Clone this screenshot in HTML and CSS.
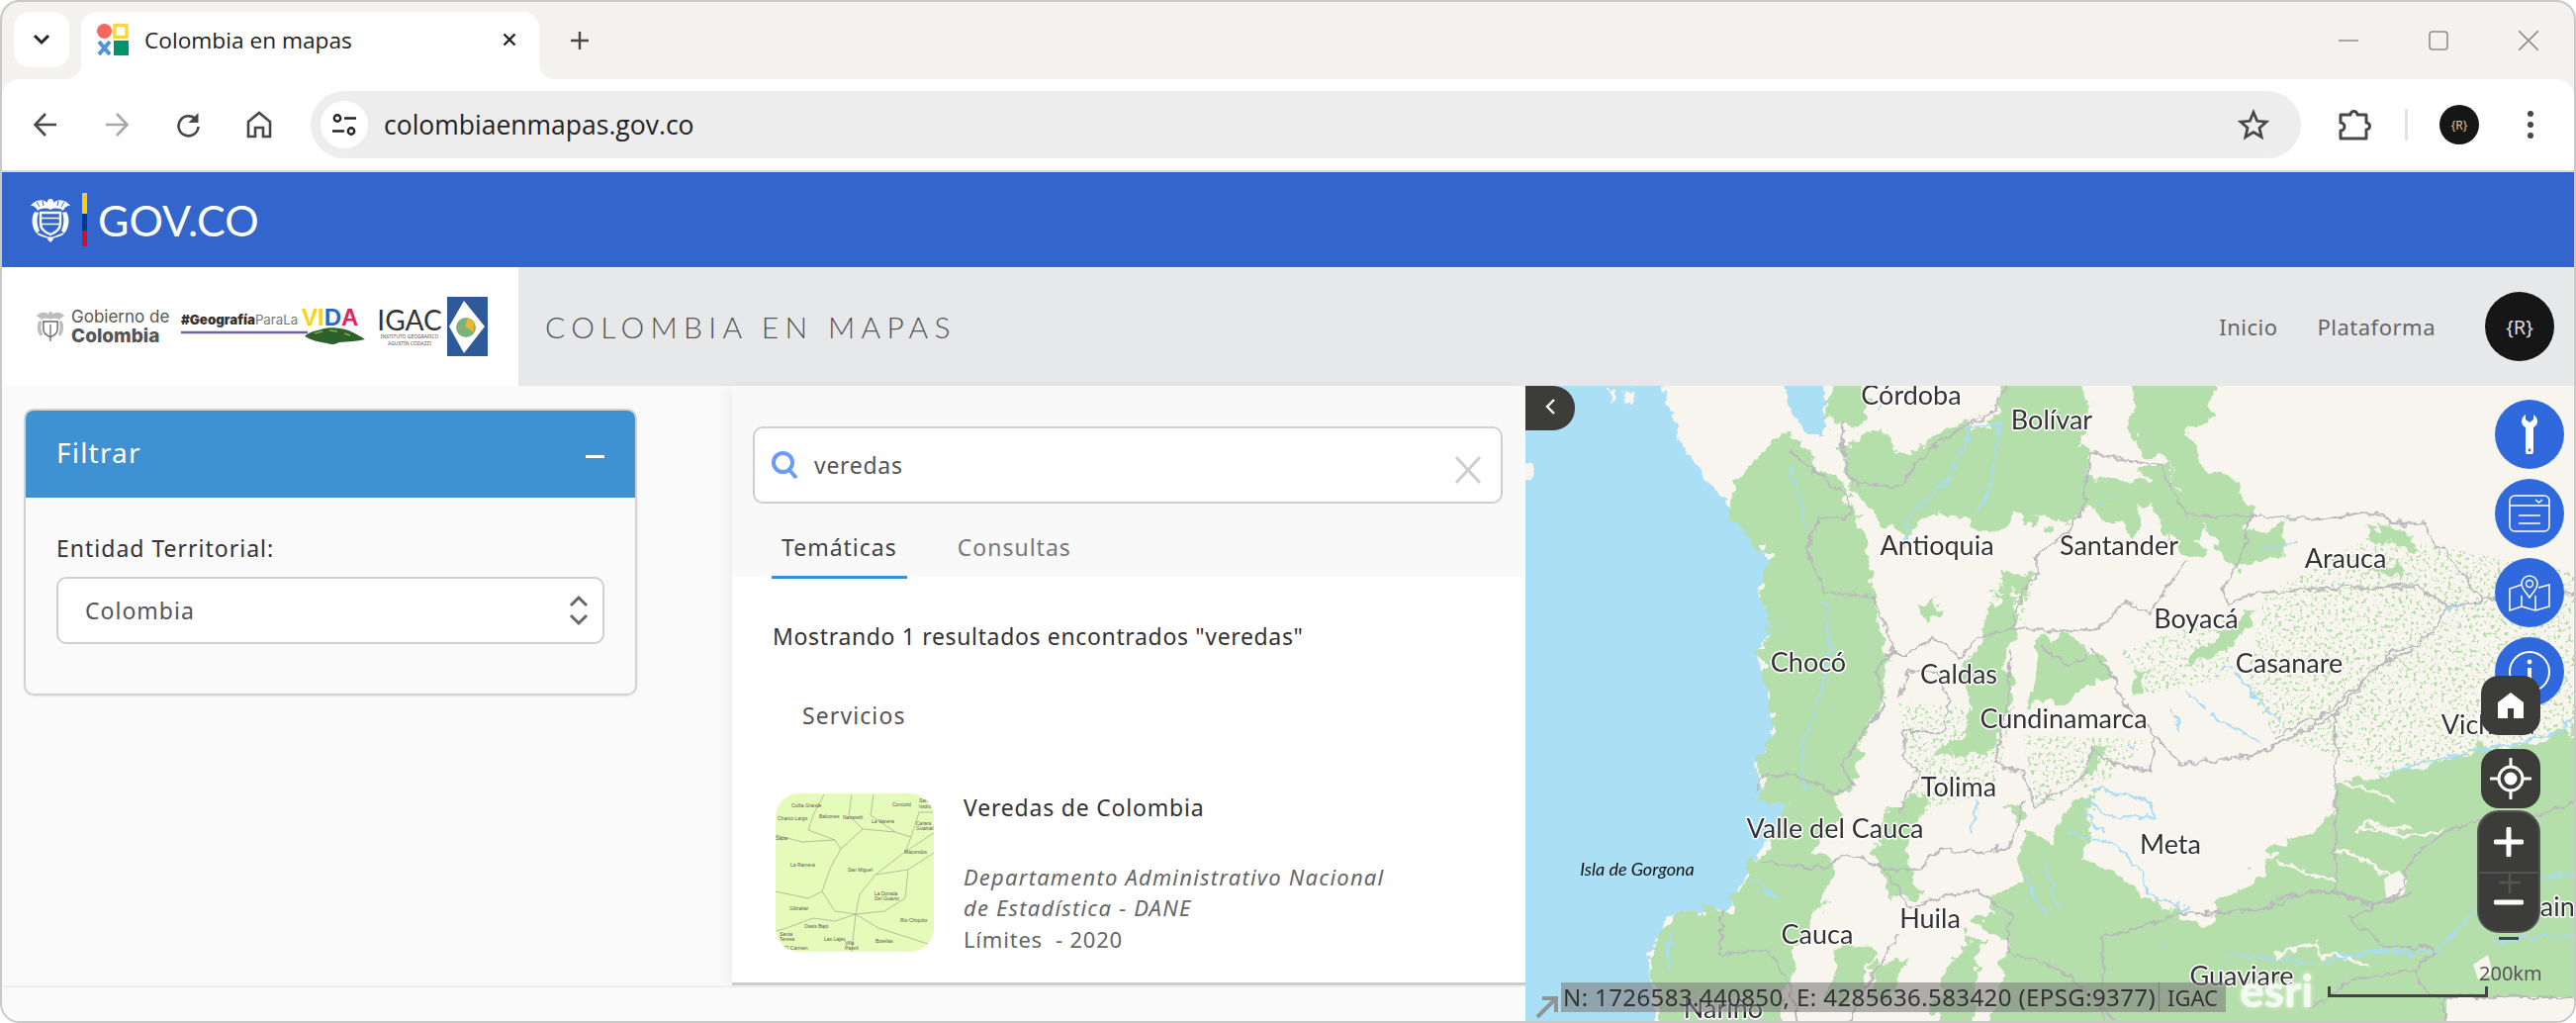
FILE: index.html
```html
<!DOCTYPE html>
<html lang="es">
<head>
  <meta charset="UTF-8">
  <title>Colombia en mapas</title>
  <link rel="stylesheet" href="styles.css">
</head>
<body>
<div class="window">

  <!-- browser chrome -->
  <div class="tabstrip">
    <div class="tab-list">
      <svg width="18" height="12" viewBox="0 0 18 12"><path d="M2 2l7 7 7-7" fill="none" stroke="#222" stroke-width="3"/></svg>
    </div>
    <div class="tab">
      <svg class="favicon" width="32" height="32" viewBox="0 0 32 32">
        <circle cx="7.500" cy="7.500" r="7.500" fill="#f4695b"/>
        <rect x="18" y="1.500" width="12" height="12" fill="none" stroke="#fdd835" stroke-width="3.400"/>
        <path d="M2 18l11 13M13 18L2 31" stroke="#4f94d8" stroke-width="4"/>
        <rect x="17" y="17" width="15" height="15" fill="#00936f"/>
      </svg>
      <span class="tab-title">Colombia en mapas</span>
      <svg class="tab-close" width="14" height="14" viewBox="0 0 14 14"><path d="M1.500 1.500l11 11M12.500 1.500l-11 11" stroke="#222" stroke-width="2.400"/></svg>
    </div>
    <svg class="new-tab" width="20" height="20" viewBox="0 0 20 20"><path d="M10 1v18M1 10h18" stroke="#474747" stroke-width="2.400"/></svg>
    <div class="win-controls">
      <svg width="20" height="20" viewBox="0 0 20 20"><path d="M0 10h20" stroke="#8d8d8d" stroke-width="1.600"/></svg>
      <svg width="20" height="20" viewBox="0 0 20 20"><rect x="1" y="1" width="18" height="18" rx="3" fill="none" stroke="#8d8d8d" stroke-width="1.600"/></svg>
      <svg width="20" height="20" viewBox="0 0 20 20"><path d="M0 0l20 20M20 0L0 20" stroke="#8d8d8d" stroke-width="1.600"/></svg>
    </div>
  </div>

  <div class="toolbar">
    <div class="nav-btn">
      <svg width="26" height="26" viewBox="0 0 26 26"><path d="M24 13H3M13 2L2.500 13 13 24" fill="none" stroke="#474747" stroke-width="2.600"/></svg>
    </div>
    <div class="nav-btn">
      <svg width="26" height="26" viewBox="0 0 26 26"><path d="M2 13h21M13 2l10.500 11L13 24" fill="none" stroke="#a8a8a8" stroke-width="2.600"/></svg>
    </div>
    <div class="nav-btn">
      <svg width="26" height="26" viewBox="0 0 26 26"><path d="M22 9a10 10 0 1 0 1.500 6" fill="none" stroke="#474747" stroke-width="2.600"/><path d="M23.500 1v10h-10z" fill="#474747"/></svg>
    </div>
    <div class="nav-btn">
      <svg width="26" height="28" viewBox="0 0 26 28"><path d="M2 26V11L13 2l11 9v15h-7v-9H9v9z" fill="none" stroke="#474747" stroke-width="2.600"/></svg>
    </div>
    <div class="omnibox">
      <div class="site-info">
        <svg width="26" height="26" viewBox="0 0 26 26" fill="none" stroke="#222" stroke-width="2.400">
          <circle cx="6" cy="6.500" r="3.200"/><path d="M13 6.500h12"/>
          <circle cx="20" cy="19.500" r="3.200"/><path d="M1 19.500h12"/>
        </svg>
      </div>
      <span class="url">colombiaenmapas.gov.co</span>
      <svg class="star" width="32" height="32" viewBox="0 0 32 32"><path d="M16 3.500l3.700 8.800 9.300.8-7 6.200 2.100 9.200L16 23.600l-8.100 4.900L10 19.300l-7-6.200 9.300-.8z" fill="none" stroke="#474747" stroke-width="2.800"/></svg>
    </div>
    <div class="nav-btn puzzle">
      <svg width="34" height="34" viewBox="0 0 34 34"><path d="M3 7h10a3.500 3.500 0 0 1 7 0h9v8a3.500 3.500 0 0 1 0 7v9H3v-8a4 4 0 0 0 0-8z" fill="none" stroke="#474747" stroke-width="3" stroke-linejoin="round"/></svg>
    </div>
    <div class="tool-sep"></div>
    <div class="profile">{R}</div>
    <div class="nav-btn menu-dots"><span></span><span></span><span></span></div>
  </div>

  <!-- gov.co bar -->
  <div class="govbar">
    <svg class="gov-emblem" width="42" height="46" viewBox="0 0 42 46">
      <g fill="#fff">
        <circle cx="21" cy="5" r="3"/>
        <path d="M21 8C14 1 6 2 1 9c4 0 6 2 7 5 4-3 9-3 13-1 4-2 9-2 13 1 1-3 3-5 7-5-5-7-13-8-20-1z"/>
        <path d="M5 15C1 21 2 31 7 37l3-3c-3-6-3-13-1-18zM37 15c4 6 3 16-2 22l-3-3c3-6 3-13 1-18z"/>
        <path d="M21 40l-3 3 3 3 3-3z"/>
      </g>
      <path d="M11 16h20v11c0 6-5 9-10 11-5-2-10-5-10-11z" fill="none" stroke="#fff" stroke-width="2.400"/>
      <path d="M11 21.500h20M11 27.500h20M8 37c4 3 9 3 13 5 4-2 9-2 13-5" fill="none" stroke="#fff" stroke-width="1.600"/>
      <path d="M7 5l3 5M13 4l1 5M35 5l-3 5M29 4l-1 5" stroke="#3366cc" stroke-width="1"/>
    </svg>
    <div class="flag-bar"></div>
    <span class="gov-text">GOV.CO</span>
  </div>

  <!-- site header -->
  <div class="sitehead">
    <div class="logos">
      <svg class="gob-emblem" width="30" height="34" viewBox="0 0 42 46">
        <g fill="#bdbdbd">
          <circle cx="21" cy="5" r="3"/>
          <path d="M21 8C14 1 6 2 1 9c4 0 6 2 7 5 4-3 9-3 13-1 4-2 9-2 13 1 1-3 3-5 7-5-5-7-13-8-20-1z"/>
          <path d="M5 15C1 21 2 31 7 37l3-3c-3-6-3-13-1-18zM37 15c4 6 3 16-2 22l-3-3c3-6 3-13 1-18z"/>
        </g>
        <path d="M11 16h20v11c0 6-5 9-10 11-5-2-10-5-10-11z" fill="none" stroke="#666" stroke-width="2"/>
        <path d="M21 20v24" stroke="#777" stroke-width="2"/>
      </svg>
      <div class="gob-text"><span>Gobierno de</span><b>Colombia</b></div>
      <div class="vida">
        <div class="vida-top"><span class="hashtag"><b>#Geografía</b>ParaLa</span><span class="vida-word"><i class="y">V</i><i class="y">I</i><i class="b">D</i><i class="r">A</i></span></div>
        <svg class="vida-line" width="188" height="20" viewBox="0 0 188 20">
          <path d="M0 5h128" stroke="#6a5fb0" stroke-width="2.500"/>
          <path d="M125 9c6-6 12-5 16-7 6-2 14-2 20-1 8 1 16 5 25 11-8 2-16 2-26 3-4 2-8 3-12 1-8-1-16-3-23-7z" fill="#2f5f2a"/>
          <path d="M135 6l8-2M150 3l8 1M165 6l6 2" stroke="#79a85e" stroke-width="1.500"/>
        </svg>
      </div>
      <div class="igac"><span class="igac-name">IGAC</span><span class="igac-sub">INSTITUTO GEOGRÁFICO<br>AGUSTÍN CODAZZI</span></div>
      <svg class="igac-flag" width="41" height="60" viewBox="0 0 41 60">
        <rect width="41" height="60" fill="#2e5a98"/>
        <path d="M17 4L38 30 17 57 2 30z" fill="#fff"/>
        <circle cx="19" cy="31" r="10" fill="#7fb27a"/>
        <path d="M21 21l6 5 0 10-9-6z" fill="#e5b92e"/>
      </svg>
    </div>
    <div class="titlebar">
      <span class="site-title">COLOMBIA EN MAPAS</span>
      <nav class="site-nav"><a>Inicio</a><a>Plataforma</a></nav>
      <div class="user-badge">{R}</div>
    </div>
  </div>

  <div class="main">
    <div class="panels">
      <div class="panels-row">

        <!-- filtros -->
        <aside class="filters">
          <div class="filter-card">
            <div class="filter-head"><span>Filtrar</span><i class="collapse-bar"></i></div>
            <div class="filter-body">
              <label class="field-label">Entidad Territorial:</label>
              <div class="select-box">
                <span>Colombia</span>
                <svg width="20" height="32" viewBox="0 0 20 32"><path d="M2 11l8-8 8 8M2 21l8 8 8-8" fill="none" stroke="#666" stroke-width="3"/></svg>
              </div>
            </div>
          </div>
        </aside>

        <!-- resultados -->
        <section class="results">
          <div class="results-top">
            <div class="search-box">
              <svg width="30" height="30" viewBox="0 0 30 30"><circle cx="12.500" cy="12.500" r="9.500" fill="none" stroke="#6b9cf5" stroke-width="4"/><path d="M18 19l8 9" stroke="#6b9cf5" stroke-width="4"/></svg>
              <span class="search-text">veredas</span>
              <svg class="search-clear" width="26" height="28" viewBox="0 0 26 28"><path d="M1 1l24 26M25 1L1 27" stroke="#cfcfcf" stroke-width="3"/></svg>
            </div>
            <div class="tabs">
              <a class="res-tab active">Temáticas</a>
              <a class="res-tab">Consultas</a>
            </div>
          </div>
          <p class="count">Mostrando 1 resultados encontrados "veredas"</p>
          <p class="group-name">Servicios</p>
          <div class="result-item">
            <svg class="thumb" width="160" height="160" viewBox="0 0 160 160">
              <rect width="160" height="160" fill="#e5fbb9"/>
              <g fill="none" stroke="#9aa88c" stroke-width=".7">
                <path d="M0 42L27 49 60 47 66 56 55 76 47 99 60 119 81 122 85 102 101 82 134 77 131 106 110 119 81 122"/>
                <path d="M66 56L88 36 121 39 137 44 131 59 101 82M60 47L33 37 38 22 49 1M88 36L74 22 77 1M121 39L96 22 99 1M137 44L145 19 160 19"/>
                <path d="M0 99L33 106 47 99M81 122L60 129 38 126 11 136 0 139M81 122L77 160M81 122L104 136 160 154M131 59L160 40M134 77L160 60"/>
              </g>
              <g class="thumb-labels">
                <text x="16" y="14">Cuilla Grande</text><text x="118" y="13">Concord</text><text x="145" y="9">San</text><text x="145" y="15">Isidro</text>
                <text x="2" y="27">Charco Largo</text><text x="44" y="25">Balcones</text><text x="68" y="26">Nazareth</text><text x="97" y="30">La Vanera</text>
                <text x="142" y="32">Carara</text><text x="142" y="37">Guamal</text><text x="0" y="47">Sapa</text><text x="130" y="61">Macondos</text>
                <text x="15" y="74">La Ramera</text><text x="73" y="79">San Miguel</text><text x="100" y="103">La Dorada</text><text x="100" y="108">Del Guavio</text>
                <text x="14" y="118">Gibraltar</text><text x="29" y="136">Oasis Bajo</text><text x="126" y="130">Rio Chiquito</text><text x="4" y="144">Santa</text><text x="4" y="149">Teresa</text>
                <text x="49" y="149">Las Lajas</text><text x="101" y="151">Botellas</text><text x="70" y="153">Villa</text><text x="70" y="158">Paseli</text><text x="9" y="158">El Carmen</text>
              </g>
            </svg>
            <div class="result-info">
              <h3 class="result-title">Veredas de Colombia</h3>
              <em class="result-org">Departamento Administrativo Nacional<br>de Estadística - DANE</em>
              <span class="result-meta">Límites &nbsp;- 2020</span>
            </div>
          </div>
        </section>
      </div>
      <div class="panels-foot"></div>
    </div>

    <!-- mapa -->
    <section class="map">
      <svg class="basemap" width="1060" height="642" viewBox="1542 390 1060 642">
        <defs>
          <filter id="rough" filterUnits="userSpaceOnUse" x="1480" y="340" width="1180" height="750" color-interpolation-filters="sRGB">
            <feTurbulence type="fractalNoise" baseFrequency=".05" numOctaves="4" seed="4" result="n"/>
            <feDisplacementMap in="SourceGraphic" in2="n" scale="30" xChannelSelector="R" yChannelSelector="G"/>
          </filter>
          <filter id="wiggle" filterUnits="userSpaceOnUse" x="1480" y="340" width="1180" height="750" color-interpolation-filters="sRGB">
            <feTurbulence type="fractalNoise" baseFrequency=".09" numOctaves="3" seed="9" result="n"/>
            <feDisplacementMap in="SourceGraphic" in2="n" scale="11" xChannelSelector="R" yChannelSelector="G"/>
          </filter>
          <filter id="speck" filterUnits="userSpaceOnUse" x="1480" y="340" width="1180" height="750" color-interpolation-filters="sRGB">
            <feTurbulence type="fractalNoise" baseFrequency=".28" numOctaves="3" seed="12"/>
            <feColorMatrix values="0 0 0 0 .71  0 0 0 0 .875  0 0 0 0 .667  14 0 0 0 -8.300"/>
            <feComposite in2="SourceAlpha" operator="in"/>
          </filter>
        </defs>
        <rect x="1542" y="390" width="1060" height="642" fill="#aadff6"/>

        <g filter="url(#wiggle)">
          <polygon class="land" points="1669,360 1692,427 1701,452 1729,489 1744,505 1761,534 1781,554 1790,567 1778,599 1795,632 1775,661 1787,694 1793,747 1775,776 1781,801 1810,809 1787,854 1770,875 1747,920 1689,924 1666,965 1678,1080 2660,1080 2660,360"/>
          <polygon class="water" points="1793,360 1844,360 1844,439 1827,439 1810,415"/>
          <polygon class="land" points="1530,464 1549,470 1548,484 1530,484"/>
          <polygon class="land" points="1626,392 1634,392 1632,404 1628,406"/>
          <polygon class="land" points="1642,396 1650,392 1652,408 1644,410"/>
        </g>

        <!-- speckled vegetation -->
        <g filter="url(#speck)">
          <polygon points="2290,600 2400,540 2660,590 2660,727 2410,783 2300,745 2270,690"/>
          <g transform="translate(1540 390) scale(.574 .4107)">
            <polygon points="840,470 900,460 880,600 800,600"/>
            <polygon points="1050,650 1250,560 1240,720 1100,760"/>
            <polygon points="660,780 860,800 830,1000 700,1050"/>
            <polygon points="880,860 1100,870 1040,960 900,1040"/>
          </g>
        </g>

        <!-- forest, in the px of the overview crop -->
        <g filter="url(#rough)">
          <g class="forest" transform="translate(1540 390) scale(.574 .4107)">
            <polygon points="355,280 440,130 470,120 500,170 560,240 590,320 610,400 615,510 640,660 635,780 600,860 580,980 550,1010 560,1060 500,1150 550,1180 520,1290 480,1380 440,1620 240,1620 220,1400 260,1300 360,1290 400,1180 430,1130 470,1020 420,1000 410,940 440,870 430,740 410,660 445,590 415,510 435,430 385,350"/>
            <polygon points="560,140 620,110 680,180 750,90 830,110 850,-60 1000,-60 990,150 980,240 1000,230 1070,230 1130,190 1160,260 1200,300 1190,420 1160,420 1130,330 1090,290 1075,380 1040,330 990,300 950,350 900,320 890,350 860,290 830,360 790,340 720,310 680,360 630,340 600,290 570,250"/>
            <polygon points="530,40 600,-60 610,60 570,110 545,100"/>
            <polygon points="1060,-60 1200,-60 1220,80 1190,100 1170,130 1200,180 1260,240 1280,320 1260,360 1320,340 1300,440 1260,450 1210,370 1170,270 1130,190 1080,140"/>
            <polygon points="800,640 830,510 870,520 865,620 850,700 860,800 800,890 770,880 790,780 770,720"/>
            <polygon points="890,770 910,620 950,620 1000,650 1040,710 1000,740 950,770 900,790"/>
            <polygon points="1230,600 1290,540 1260,640 1180,690 1170,660"/>
            <polygon points="620,1150 650,1040 700,1000 710,1050 670,1130 700,1250 660,1270 640,1220"/>
            <polygon points="800,1320 880,1200 960,1040 1010,990 990,1160 1090,1250 1160,1290 1160,1340 1100,1380 1020,1620 820,1620 850,1400"/>
            <polygon points="700,1620 780,1350 810,1360 780,1620"/>
            <polygon points="720,920 760,920 740,870 700,960"/>
            <polygon points="1020,1360 1200,1320 1310,1180 1430,1120 1430,980 1620,930 1620,1620 1020,1620"/>
            <polygon points="1290,350 1350,330 1340,400 1300,440"/>
            <polygon points="1480,360 1540,350 1520,400"/>
            <polygon points="1075,700 1100,700 1095,760 1070,760"/>
            <polygon points="840,470 910,460 880,510 840,520"/>
            <polygon points="700,540 730,520 735,570 705,580"/>
            <polygon points="740,880 850,830 800,910 760,910"/>
            <polygon points="1000,880 1030,880 1010,950 990,950"/>
            <polygon points="880,1100 960,1120 950,1200 880,1290"/>
            <polygon points="850,1030 885,1040 870,1080"/>
            <polygon points="560,1350 620,1400 590,1520 530,1500"/>
            <polygon points="620,1420 680,1400 650,1500 610,1510"/>
          </g>
          <polygon class="green" points="2292,875 2300,850 2335,845 2360,820 2365,800 2410,783 2513,757 2660,727 2660,1080 2220,1080"/>
          <polygon class="green" points="2405,530 2440,540 2445,560 2420,555"/>
          <polygon class="green" points="2400,566 2430,572 2425,585 2405,578"/>
        </g>

        <!-- beige clearings in the south east -->
        <g class="clearings" filter="url(#wiggle)">
          <path d="M2362,860 2385,866 2400,875 2420,890M2385,835 2430,845 2470,840M2382,840 2395,830 2410,840 2440,835"/>
          <path d="M2360,790 2380,795 2400,800 2420,810"/>
          <path d="M2300,966 2340,953 2345,966 2360,965 2395,975"/>
          <path d="M2300,870 2340,885 2360,890"/>
        </g>
        <polygon class="land" points="2410,888 2425,880 2433,890 2430,905 2412,907"/>
        <polygon class="land" points="2473,1008 2604,1008 2604,1034 2473,1034"/>
        <polygon class="land" points="2500,975 2515,965 2520,985 2505,990"/>

        <!-- rivers -->
        <g class="rivers" filter="url(#wiggle)">
          <g transform="translate(1540 390) scale(.574 .4107)">
            <path d="M470,200 490,300 500,360M530,530 540,640 520,780 490,880 495,1000M620,60 650,40M780,100 840,95 820,260 800,310M790,100 750,230 680,320 670,400M1010,290 1040,290M1300,400 1360,385M1165,750 1200,790M1140,790 1155,850M1210,810 1300,880M1250,700 1330,830M1230,700 1250,690"/>
            <path d="M1000,990 1100,1020 1110,1060 1030,1060 990,1020M960,1100 1040,1130 1090,1200 1100,1250 1160,1280M1020,1100 990,1050M880,1200 920,1300M920,1170 940,1290M800,1020 790,1100M1060,880 1080,900M260,1340 255,1440M400,1210 450,1260M1160,1300 1170,1280"/>
            <path d="M1240,1400 1400,1420 1500,1390 1568,1400M1130,1370 1120,1390"/>
          </g>
          <path d="M2410,783 2510,757 2575,745 2604,727"/>
          <path d="M2460,963 2487,937 2505,920"/>
          <path d="M2360,963 2380,967 2410,960 2460,962"/>
          <path d="M2520,953 2553,947 2602,947"/>
          <path d="M2567,890 2585,885 2602,884"/>
          <path d="M2460,637 2472,615 2510,608"/>
        </g>

        <!-- boundaries -->
        <g class="bounds" filter="url(#wiggle)">
          <g transform="translate(1540 390) scale(.574 .4107)">
            <path d="M560,80 570,220 590,240 670,250 690,190 740,130 790,90 830,60 850,0"/>
            <path d="M470,160 500,200 570,270 580,320 520,330 500,400 530,510 610,515 640,600 650,660 620,700 640,790 610,830 560,930 580,980 550,1005 480,960 420,960 410,1000"/>
            <path d="M640,660 680,660 720,620 750,640 770,670 800,620 860,600 880,500 910,460 900,420 960,360 985,300 1000,160 1040,180 1120,195 1160,300 1170,320 1280,320 1420,330 1480,310 1568,345"/>
            <path d="M1280,320 1260,440 1230,500 1240,540 1290,510 1400,500 1568,495"/>
            <path d="M660,770 680,700 730,710 750,780 740,850 670,850 670,920 700,950 660,1050"/>
            <path d="M860,600 920,600 970,610 1020,590 1060,530 1100,560 1170,430"/>
            <path d="M1000,650 1040,720 1050,770 1110,860 1160,930 1290,910 1430,810 1500,690 1568,650"/>
            <path d="M1110,860 1105,950 1040,930 1000,890 990,960 900,1040 880,950 830,930 850,800 860,650"/>
            <path d="M1000,660 960,690 910,640"/>
            <path d="M1430,810 1430,1240"/>
            <path d="M1020,1360 1160,1300 1290,1290 1400,1240 1500,1280 1568,1250"/>
            <path d="M880,1020 860,1130 800,1150 730,1140 700,1190 640,1190 570,1150 530,1190 420,1170"/>
            <path d="M640,1200 680,1280 800,1240 860,1300 850,1390 950,1440 1040,1560"/>
            <path d="M1020,1360 1020,1568"/>
            <path d="M350,1290 350,1400 430,1390 470,1480 480,1568"/>
            <path d="M660,1350 620,1440 570,1568"/>
          </g>
          <path d="M2400,518 2410,520 2413,525 2430,532 2448,528 2510,607 2520,605 2602,600"/>
          <path d="M2400,595 2423,590 2443,592 2467,608 2473,613 2510,608"/>
          <path d="M2472,615 2460,637 2443,653 2423,657 2397,680 2370,703 2360,717 2313,738 2300,747"/>
          <path d="M2300,906 2360,902 2400,913 2427,903 2433,877 2447,857 2497,830 2567,823 2602,810"/>
          <path d="M2373,928 2423,907M2373,928 2397,943 2407,957 2457,957 2460,963 2443,980 2380,990 2333,1020"/>
          <path d="M2443,980 2447,997 2460,1007 2473,1008 2602,1008M2472,1008V1034"/>
        </g>

        <!-- labels -->
        <g class="labels">
          <text x="1932" y="409">Córdoba</text>
          <text x="2074" y="434">Bolívar</text>
          <text x="1958" y="561">Antioquia</text>
          <text x="2142" y="561">Santander</text>
          <text x="2371" y="574">Arauca</text>
          <text x="2220" y="635">Boyacá</text>
          <text x="1828" y="679">Chocó</text>
          <text x="1980" y="691">Caldas</text>
          <text x="2314" y="680">Casanare</text>
          <text x="2086" y="736">Cundinamarca</text>
          <text x="1980" y="805">Tolima</text>
          <text x="1855" y="847">Valle del Cauca</text>
          <text x="2194" y="863">Meta</text>
          <text x="1951" y="938">Huila</text>
          <text x="1837" y="954">Cauca</text>
          <text x="2266" y="996">Guaviare</text>
          <text x="1742" y="1029">Nariño</text>
          <text x="2515" y="742">Vichada</text>
          <text x="2578" y="926">Guainía</text>
          <text class="islet" x="1655" y="885">Isla de Gorgona</text>
        </g>
      </svg>

      <!-- things on top of the map -->
      <button class="map-collapse">
        <svg width="12" height="18" viewBox="0 0 12 18"><path d="M10 2L3 9l7 7" fill="none" stroke="#fff" stroke-width="2.400"/></svg>
      </button>

      <div class="map-tools">
        <div class="tool-round">
          <svg width="16" height="40" viewBox="0 0 16 40"><path d="M4 0v5l4 3 4-3V0c3 2 4 5 4 7 0 3-2 5-4 6v24a3 3 0 0 1-8 0V13C2 12 0 10 0 7c0-2 1-5 4-7z" fill="#fff"/><circle cx="8" cy="36" r="1.400" fill="#3069de"/></svg>
        </div>
        <div class="tool-round">
          <svg width="42" height="38" viewBox="0 0 42 38" fill="none" stroke="#fff" stroke-width="1.500"><rect x="1" y="1" width="40" height="36" rx="5"/><path d="M1 11h40M27 5l3.500 3L34 5M10 21h22M10 29h22"/></svg>
        </div>
        <div class="tool-round">
          <svg width="42" height="38" viewBox="0 0 42 38" fill="none" stroke="#fff" stroke-width="1.500"><path d="M13 11L1 15v22l12-4 14 4 14-4V11l-11 3M13 33V22M27 37V22"/><path d="M21 24c-4-6-8-9-8-14a8 8 0 0 1 16 0c0 5-4 8-8 14z" fill="#3069de"/><circle cx="21" cy="10" r="3.500"/></svg>
        </div>
        <div class="tool-round">
          <svg width="42" height="42" viewBox="0 0 42 42" fill="none" stroke="#fff"><circle cx="21" cy="21" r="20" stroke-width="2"/><path d="M21 17v14" stroke-width="4"/><circle cx="21" cy="11" r="2.400" fill="#fff" stroke="none"/></svg>
        </div>
      </div>

      <div class="map-ctrl ctrl-home">
        <svg width="26" height="28" viewBox="0 0 26 28"><path d="M13 1L0 11v16h10v-10h6v10h10V11z" fill="#fff"/></svg>
      </div>
      <div class="map-ctrl ctrl-locate">
        <svg width="42" height="42" viewBox="0 0 42 42"><circle cx="21" cy="21" r="12" fill="none" stroke="#fff" stroke-width="3"/><circle cx="21" cy="21" r="6.500" fill="#fff"/><path d="M21 1v7M21 34v7M1 21h7M34 21h7" stroke="#fff" stroke-width="3" stroke-linecap="round"/></svg>
      </div>
      <div class="ghost-minus"></div>
      <div class="ctrl-zoom">
        <div class="zoom-btn"><svg width="30" height="30" viewBox="0 0 30 30"><path d="M15 2v26M2 15h26" stroke="#fff" stroke-width="5" stroke-linecap="round"/></svg></div>
        <div class="zoom-btn">
          <svg class="ghost-plus" width="22" height="22" viewBox="0 0 22 22"><path d="M11 0v22M0 11h22" stroke="#555" stroke-width="2.500"/></svg>
          <svg width="30" height="30" viewBox="0 0 30 30"><path d="M2 15h26" stroke="#fff" stroke-width="5" stroke-linecap="round"/></svg>
        </div>
      </div>

      <svg class="resize-arrow" width="26" height="26" viewBox="0 0 26 26"><path d="M9 3h14v14M21 5L4 22" fill="none" stroke="#8f9494" stroke-width="4"/></svg>
      <div class="coords">
        <span class="coords-val">N: 1726583.440850, E: 4285636.583420 (EPSG:9377)</span>
        <span class="coords-src">IGAC</span>
      </div>
      <span class="esri">esri</span>
      <div class="scale"><span>200km</span></div>
    </section>
  </div>
</div>
</body>
</html>
```

FILE: styles.css
```css
* {
  box-sizing: border-box;
}

body {
  margin: 0;
  background: #fff;
  font-family: "Noto Sans", sans-serif;
  color: #333;
}

.window {
  width: 2604px;
  height: 1034px;
  border: 2px solid #c9c9c7;
  border-radius: 20px;
  background: #f3f2f1;
  overflow: hidden;
  display: flex;
  flex-direction: column;
}

/* Browser chrome */
.tabstrip {
  height: 78px;
  flex: none;
  display: flex;
  padding: 10px 0 0 12px;
}

.tab-list {
  width: 56px;
  height: 56px;
  border-radius: 16px;
  background: #fff;
  display: flex;
  align-items: center;
  justify-content: center;
}

.tab {
  position: relative;
  width: 463px;
  height: 68px;
  margin-left: 12px;
  padding: 0 23px 12px 16px;
  background: #fff;
  border-radius: 16px 16px 0 0;
  display: flex;
  align-items: center;
}

.tab::before,
.tab::after {
  content: "";
  position: absolute;
  bottom: 0;
  width: 16px;
  height: 16px;
}

.tab::before {
  left: -16px;
  background: radial-gradient(circle at 0 0, transparent 16px, #fff 16.5px);
}

.tab::after {
  right: -16px;
  background: radial-gradient(circle at 100% 0, transparent 16px, #fff 16.5px);
}

.tab-title {
  margin-left: 16px;
  font-family: "Open Sans", sans-serif;
  font-size: 22.700px;
  color: #222;
}

.tab-close {
  margin-left: auto;
}

.new-tab {
  margin: 19px 0 0 31px;
}

.win-controls {
  margin-left: auto;
  padding: 19px 36px 0 0;
  display: flex;
  gap: 71px;
}

.toolbar {
  height: 94px;
  flex: none;
  background: #fff;
  border-bottom: 2px solid #dadce0;
  border-radius: 18px 18px 0 0;
  padding: 12px 14px 12px 8px;
  display: flex;
  align-items: center;
}

.nav-btn {
  width: 72px;
  flex: none;
  display: flex;
  align-items: center;
  justify-content: center;
}

.omnibox {
  flex: 1;
  height: 68px;
  margin-left: 16px;
  padding: 0 32px 0 10px;
  background: #eeedee;
  border-radius: 34px;
  display: flex;
  align-items: center;
}

.site-info {
  width: 48px;
  height: 48px;
  border-radius: 50%;
  background: #fff;
  display: flex;
  align-items: center;
  justify-content: center;
}

.url {
  margin-left: 16px;
  font-family: "Open Sans", sans-serif;
  font-size: 26.500px;
  color: #222;
}

.star {
  margin-left: auto;
}

.puzzle {
  width: 60px;
  margin-left: 24px;
}

.tool-sep {
  width: 3px;
  height: 32px;
  margin-left: 21px;
  background: #e2e2e2;
  border-radius: 2px;
}

.profile {
  width: 40px;
  height: 40px;
  margin-left: 32px;
  flex: none;
  border-radius: 50%;
  background: #161616;
  color: #c8c8c8;
  font-size: 12px;
  display: flex;
  align-items: center;
  justify-content: center;
}

.menu-dots {
  width: 60px;
  margin-left: 22px;
  flex-direction: column;
  gap: 5px;
}

.menu-dots span {
  width: 6px;
  height: 6px;
  border-radius: 50%;
  background: #474747;
}

/* Gov.co bar */
.govbar {
  height: 96px;
  flex: none;
  background: #3366cc;
  padding-left: 28px;
  display: flex;
  align-items: center;
}

.flag-bar {
  width: 5px;
  height: 54px;
  margin-left: 11px;
  background: linear-gradient(#ffcd00 0 39%, #003893 39% 70%, #ce1126 70%);
}

.gov-text {
  margin-left: 11px;
  font-family: "Lato", sans-serif;
  font-size: 43px;
  color: #fff;
}

/* Site header */
.sitehead {
  height: 120px;
  flex: none;
  display: flex;
  background: #fff;
}

.logos {
  width: 522px;
  flex: none;
  padding: 0 0 0 34px;
  display: flex;
  align-items: center;
  color: #555;
}

.gob-text {
  width: 100px;
  margin-left: 6px;
  display: flex;
  flex-direction: column;
  font-family: "Inter", sans-serif;
  font-size: 17px;
  line-height: 19px;
  white-space: nowrap;
}

.gob-text b {
  font-size: 19px;
  font-weight: 800;
}

.vida {
  width: 188px;
  margin-left: 11px;
  padding-top: 2px;
}

.vida-top {
  height: 20px;
  display: flex;
  align-items: flex-end;
  white-space: nowrap;
}

.hashtag {
  width: 122px;
  font-family: "Inter", sans-serif;
  font-size: 13.300px;
  color: #777;
  white-space: nowrap;
}

.hashtag b {
  color: #333;
  font-weight: 900;
}

.vida-word {
  font-family: "Liberation Sans", sans-serif;
  font-size: 24px;
  line-height: 20px;
  font-weight: 700;
}

.vida-word i {
  font-style: normal;
}

.vida-word .y { color: #fcd116; }
.vida-word .b { color: #2a6ab8; }
.vida-word .r { color: #e0245e; }

.vida-line {
  display: block;
}

.igac {
  width: 68px;
  margin-left: 9px;
  display: flex;
  flex-direction: column;
  align-items: center;
}

.igac-name {
  font-family: "Lato", sans-serif;
  font-size: 28px;
  line-height: 28px;
  color: #333;
}

.igac-sub {
  font-size: 5px;
  line-height: 7px;
  text-align: center;
  white-space: nowrap;
}

.igac-flag {
  margin-left: 4px;
}

.titlebar {
  flex: 1;
  background: #e7e8ea;
  padding: 0 20px 0 27px;
  display: flex;
  align-items: center;
}

.site-title {
  font-family: "Lato", sans-serif;
  font-weight: 300;
  font-size: 30px;
  letter-spacing: 6.300px;
  color: #555;
}

.site-nav {
  margin-left: auto;
  display: flex;
  gap: 40px;
  font-size: 22px;
  letter-spacing: .5px;
  color: #666;
}

.user-badge {
  width: 70px;
  height: 70px;
  margin-left: 50px;
  border-radius: 50%;
  background: #161616;
  color: #ddd;
  font-size: 20px;
  display: flex;
  align-items: center;
  justify-content: center;
}

/* Main area */
.main {
  flex: 1;
  min-height: 0;
  display: flex;
  background: #fafafa;
}

.panels {
  width: 1540px;
  flex: none;
  display: flex;
  flex-direction: column;
}

.panels-row {
  height: 606px;
  flex: none;
  display: flex;
}

.panels-foot {
  flex: 1;
  margin-top: 2px;
  background: #fafafa;
  box-shadow: 0 -1px 2px rgba(0, 0, 0, .08);
}

.filters {
  width: 738px;
  flex: none;
  padding: 23px 0 0 22px;
  background: #fafafa;
}

.filter-card {
  width: 620px;
  height: 290px;
  border: 2px solid #d2d2d2;
  border-radius: 10px;
  overflow: hidden;
  box-shadow: 0 1px 2px rgba(0, 0, 0, .08);
}

.filter-head {
  height: 88px;
  padding: 0 31px 4px;
  background: #3f92d2;
  color: #fff;
  font-size: 28px;
  letter-spacing: 1.200px;
  display: flex;
  align-items: center;
  justify-content: space-between;
}

.collapse-bar {
  width: 19px;
  height: 3px;
  margin-top: 8px;
  background: #fff;
  display: block;
}

.filter-body {
  padding: 35px 31px 0;
}

.field-label {
  display: block;
  font-size: 23px;
  letter-spacing: 1px;
  line-height: 32px;
  color: #333;
}

.select-box {
  height: 68px;
  margin-top: 13px;
  padding: 0 14px 0 27px;
  background: #fff;
  border: 2px solid #cfcfcf;
  border-radius: 10px;
  font-size: 23px;
  letter-spacing: 1px;
  color: #555;
  display: flex;
  align-items: center;
  justify-content: space-between;
}

.results {
  width: 802px;
  height: 606px;
  flex: none;
  background: #fff;
  border-bottom: 3px solid #ccc;
  box-shadow: -6px 0 10px rgba(0, 0, 0, .04);
}

.results-top {
  height: 193px;
  padding: 41px 23px 0 21px;
  background: #f9f9f9;
}

.search-box {
  height: 78px;
  padding: 0 16px;
  background: #fff;
  border: 2px solid #cfcfcf;
  border-radius: 10px;
  display: flex;
  align-items: center;
  font-size: 23px;
  letter-spacing: .7px;
  color: #555;
}

.search-text {
  margin-left: 14px;
}

.search-clear {
  margin-left: auto;
  margin-top: 10px;
  margin-right: 4px;
}

.tabs {
  height: 74px;
  padding: 0 0 0 19px;
  display: flex;
  gap: 41px;
}

.res-tab {
  height: 76px;
  padding: 0 10px;
  font-size: 23px;
  letter-spacing: 1px;
  line-height: 88px;
  color: #777;
}

.res-tab.active {
  color: #444;
  border-bottom: 3px solid #3a8fdd;
}

.count {
  margin: 44px 0 0 41px;
  font-size: 23px;
  letter-spacing: .65px;
  line-height: 32px;
  color: #333;
}

.group-name {
  margin: 48px 0 0 71px;
  font-size: 23px;
  letter-spacing: 1.100px;
  line-height: 32px;
  color: #555;
}

.result-item {
  margin: 63px 0 0 44px;
  display: flex;
}

.thumb {
  flex: none;
  border-radius: 24px;
}

.thumb-labels {
  font-family: "Liberation Sans", sans-serif;
  font-size: 5px;
  fill: #555;
}

.result-info {
  margin-left: 30px;
  display: flex;
  flex-direction: column;
}

.result-title {
  margin: 0;
  font-size: 23px;
  font-weight: 400;
  letter-spacing: .8px;
  line-height: 28px;
  color: #333;
}

.result-org {
  margin-top: 41px;
  font-size: 22px;
  letter-spacing: 1.200px;
  line-height: 31px;
  color: #666;
}

.result-meta {
  font-size: 22px;
  letter-spacing: .8px;
  line-height: 32px;
  color: #666;
  white-space: pre;
}

/* Map */
.map {
  flex: 1;
  position: relative;
  overflow: hidden;
  background: #aadff6;
}

.basemap {
  display: block;
}

.land { fill: #f8f4ee; }
.water { fill: #aadff6; }
.green,
.forest polygon { fill: #b5dfaa; }

.clearings path {
  fill: none;
  stroke: #f8f4ee;
  stroke-width: 3;
}

.rivers path {
  fill: none;
  stroke: #a8dcf4;
  stroke-width: 2;
  vector-effect: non-scaling-stroke;
}

.bounds path {
  fill: none;
  stroke: #b9b8bc;
  stroke-width: 2;
  vector-effect: non-scaling-stroke;
}

.labels text {
  font-family: "Lato", sans-serif;
  font-size: 27px;
  fill: #333;
  stroke: #fff;
  stroke-width: 3px;
  stroke-linejoin: round;
  paint-order: stroke;
  text-anchor: middle;
}

.labels .islet {
  font-size: 18px;
  font-style: italic;
  fill: #111;
  stroke: none;
}

.map-collapse {
  position: absolute;
  left: 0;
  top: 0;
  width: 50px;
  height: 45px;
  padding: 0;
  border: 0;
  background: #3c3c3a;
  border-radius: 0 22px 22px 0;
}

.map-tools {
  position: absolute;
  right: 10px;
  top: 14px;
  display: flex;
  flex-direction: column;
  gap: 10px;
}

.tool-round {
  width: 70px;
  height: 70px;
  border-radius: 50%;
  background: #3069de;
  display: flex;
  align-items: center;
  justify-content: center;
}

.map-ctrl {
  position: absolute;
  left: 966px;
  width: 60px;
  height: 60px;
  border-radius: 18px;
  background: #3c3c3a;
  display: flex;
  align-items: center;
  justify-content: center;
}

.ctrl-home { top: 293px; }
.ctrl-locate { top: 367px; }

.ctrl-zoom {
  position: absolute;
  left: 962px;
  top: 429px;
  width: 64px;
  height: 124px;
  border: 2px solid #545456;
  border-radius: 22px;
  background: #3c3c3a;
  overflow: hidden;
}

.zoom-btn {
  position: relative;
  height: 60px;
  display: flex;
  align-items: center;
  justify-content: center;
}

.zoom-btn + .zoom-btn {
  border-top: 2px solid #545456;
}

.ghost-plus {
  position: absolute;
  left: 20px;
  top: -2px;
}

.ghost-minus {
  position: absolute;
  left: 984px;
  top: 557px;
  width: 20px;
  height: 3px;
  background: #444;
}

.resize-arrow {
  position: absolute;
  left: 8px;
  bottom: 0;
}

.coords {
  position: absolute;
  left: 36px;
  top: 603px;
  width: 672px;
  height: 30px;
  padding-left: 2px;
  background: rgba(125, 125, 125, .6);
  font-size: 24px;
  letter-spacing: .4px;
  line-height: 30px;
  color: #333;
  display: flex;
  white-space: nowrap;
  overflow: hidden;
}

.coords-src {
  margin-left: auto;
  padding: 0 8px;
  border-left: 1px solid #777;
  font-size: 22px;
  letter-spacing: 0;
}

.esri {
  position: absolute;
  left: 722px;
  top: 583px;
  font-family: "Lato", sans-serif;
  font-weight: 900;
  font-size: 46px;
  color: #fff;
  opacity: .85;
  text-shadow: 0 0 4px rgba(255, 255, 255, .9);
}

.scale {
  position: absolute;
  left: 811px;
  top: 607px;
  width: 162px;
  height: 11px;
  border: 3px solid #444;
  border-top: 0;
}

.scale span {
  position: absolute;
  left: 150px;
  top: -27px;
  font-size: 20px;
  color: #555;
}
```
